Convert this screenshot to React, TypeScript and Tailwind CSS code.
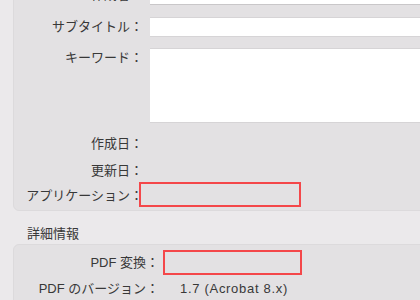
import React from "react";

const font = { fontFamily: '"Liberation Sans", "Noto Sans CJK JP", sans-serif' };

function Label({ children, w = "w-[129px]", className = "" }: { children: React.ReactNode; w?: string; className?: string }) {
  return (
    <div className={`${w} shrink-0 text-right text-[13px] leading-[20px] text-[#383838] ${className}`}>{children}</div>
  );
}

export default function App() {
  return (
    <div className="w-[420px] h-[300px] overflow-hidden bg-[#ebe9eb] antialiased" style={font}>
      <div className="ml-[13px] mt-[-25px] w-[440px] rounded-b-[6px] bg-[#e3e1e3] border border-[#dcdadc] pt-[9px] pb-[3px]">
        <div className="flex h-[20px]">
          <Label>作成者：</Label>
          <div className="ml-[7px] flex-1 bg-white border-b border-[#c9c7c9]" />
        </div>
        <div className="flex h-[20px] mt-[12px]">
          <Label>サブタイトル：</Label>
          <div className="ml-[7px] flex-1 bg-white border-y border-[#d6d4d6]" />
        </div>
        <div className="flex h-[75px] mt-[11px]">
          <Label>キーワード：</Label>
          <div className="ml-[7px] flex-1 bg-white border-y border-[#d6d4d6]" />
        </div>
        <div className="flex h-[20px] mt-[11px]">
          <Label>作成日：</Label>
        </div>
        <div className="flex h-[20px] mt-[7px]">
          <Label>更新日：</Label>
        </div>
        <div className="flex h-[25px] mt-[1px] items-end">
          <Label className="pb-[1px]">アプリケーション：</Label>
          <div className="ml-[-4px] w-[162px] h-[25px] border-2 border-[#f4474a]" />
        </div>
      </div>
      <div className="ml-[27px] h-[33px] pt-[13px] text-[13px] leading-[20px] text-[#383838]">詳細情報</div>
      <div className="ml-[13px] w-[440px] h-[80px] rounded-[6px] bg-[#e3e1e3] border border-[#dcdadc] pt-[5px]">
        <div className="flex h-[25px] items-center">
          <Label w="w-[145px]">PDF 変換：</Label>
          <div className="ml-[4px] w-[139px] h-[25px] border-2 border-[#f4474a]" />
        </div>
        <div className="flex h-[20px] mt-[4px] items-center">
          <Label w="w-[145px]">PDF のバージョン：</Label>
          <div className="ml-[21px] text-[13px] leading-[20px] tracking-[0.7px] text-[#383838]">1.7 (Acrobat 8.x)</div>
        </div>
      </div>
    </div>
  );
}
